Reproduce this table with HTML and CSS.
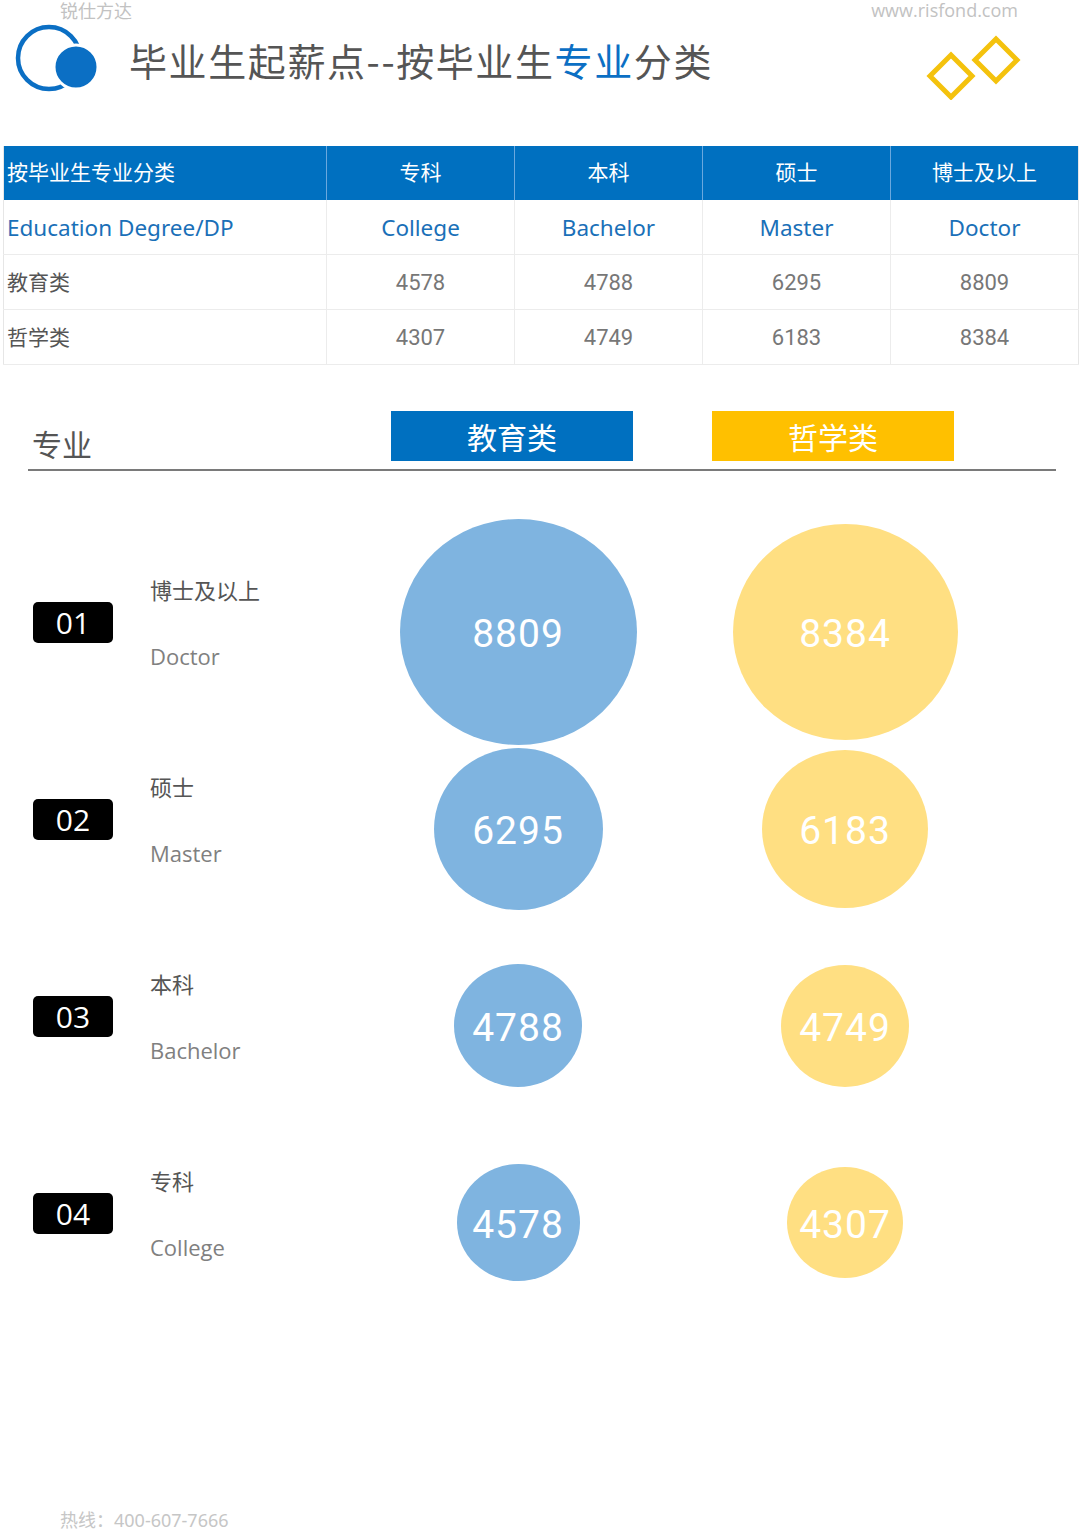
FILE: index.html
```html
<!DOCTYPE html>
<html lang="zh-CN">
<head>
<meta charset="utf-8">
<title>毕业生起薪点--按毕业生专业分类</title>
<link rel="stylesheet" href="styles.css">
</head>
<body>
<div class="page">
  <header class="header">
    <div class="topline">
      <span>锐仕方达</span>
      <span class="site">www.risfond.com</span>
    </div>
    <div class="brand">
      <svg class="logo" width="100" height="80" viewBox="0 0 100 80" aria-hidden="true">
        <circle cx="49" cy="38" r="31" fill="none" stroke="#0b6fc4" stroke-width="4.5"/>
        <circle cx="76" cy="47" r="22" fill="#0b6fc4" stroke="#ffffff" stroke-width="3"/>
      </svg>
      <h1 class="title">毕业生起薪点--按毕业生<span class="hl">专业</span>分类</h1>
      <svg class="diamonds" width="96" height="80" viewBox="0 0 96 80" aria-hidden="true">
        <polygon points="26,35 47,56 26,77 5,56" fill="none" stroke="#f4c20d" stroke-width="5"/>
        <polygon points="71,19 92,40 71,61 50,40" fill="none" stroke="#f4c20d" stroke-width="5"/>
      </svg>
    </div>
  </header>

  <table class="data">
    <colgroup>
      <col class="c0"><col class="c1"><col class="c1"><col class="c1"><col class="c1">
    </colgroup>
    <thead>
      <tr>
        <th class="first">按毕业生专业分类</th>
        <th>专科</th>
        <th>本科</th>
        <th>硕士</th>
        <th>博士及以上</th>
      </tr>
    </thead>
    <tbody>
      <tr class="en-row">
        <td class="first">Education Degree/DP</td>
        <td>College</td>
        <td>Bachelor</td>
        <td>Master</td>
        <td>Doctor</td>
      </tr>
      <tr>
        <td class="first">教育类</td>
        <td>4578</td>
        <td>4788</td>
        <td>6295</td>
        <td>8809</td>
      </tr>
      <tr>
        <td class="first">哲学类</td>
        <td>4307</td>
        <td>4749</td>
        <td>6183</td>
        <td>8384</td>
      </tr>
    </tbody>
  </table>

  <div class="legend">
    <span class="legend-label">专业</span>
    <span class="tag tag-blue">教育类</span>
    <span class="tag tag-yellow">哲学类</span>
  </div>

  <div class="rows">
    <div class="row">
      <div class="lead">
        <div class="badge-col"><span class="badge">01</span></div>
        <div class="label-col"><div class="cn">博士及以上</div><div class="en">Doctor</div></div>
      </div>
      <div class="circle-col blue-col"><div class="bubble blue" style="width:237px;height:226px">8809</div></div>
      <div class="circle-col yellow-col"><div class="bubble yellow" style="width:225px;height:216px">8384</div></div>
    </div>
    <div class="row">
      <div class="lead">
        <div class="badge-col"><span class="badge">02</span></div>
        <div class="label-col"><div class="cn">硕士</div><div class="en">Master</div></div>
      </div>
      <div class="circle-col blue-col"><div class="bubble blue" style="width:169px;height:162px">6295</div></div>
      <div class="circle-col yellow-col"><div class="bubble yellow" style="width:166px;height:158px">6183</div></div>
    </div>
    <div class="row">
      <div class="lead">
        <div class="badge-col"><span class="badge">03</span></div>
        <div class="label-col"><div class="cn">本科</div><div class="en">Bachelor</div></div>
      </div>
      <div class="circle-col blue-col"><div class="bubble blue" style="width:128px;height:123px">4788</div></div>
      <div class="circle-col yellow-col"><div class="bubble yellow" style="width:128px;height:122px">4749</div></div>
    </div>
    <div class="row">
      <div class="lead">
        <div class="badge-col"><span class="badge">04</span></div>
        <div class="label-col"><div class="cn">专科</div><div class="en">College</div></div>
      </div>
      <div class="circle-col blue-col"><div class="bubble blue" style="width:123px;height:117px">4578</div></div>
      <div class="circle-col yellow-col"><div class="bubble yellow" style="width:116px;height:111px">4307</div></div>
    </div>
  </div>

  <footer class="footer">热线：<span class="num">400-607-7666</span></footer>
</div>
</body>
</html>
```

FILE: styles.css
```css
html, body {
  margin: 0;
  padding: 0;
  background: #ffffff;
}
body {
  width: 1080px;
  height: 1531px;
  overflow: hidden;
  font-family: "Noto Sans", "Noto Sans CJK SC", sans-serif;
  color: #555555;
}
.page {
  width: 1080px;
}

/* header */
.topline {
  display: flex;
  justify-content: space-between;
  padding: 0 62px 0 60px;
  height: 20px;
  font-size: 18px;
  line-height: 20px;
  color: #c2c2c2;
  font-family: "Noto Sans CJK SC", sans-serif;
}
.site {
  font-family: "Open Sans", sans-serif;
}
.brand {
  display: flex;
  align-items: center;
  height: 80px;
}
.logo {
  flex: none;
  display: block;
}
.title {
  margin: 0 0 0 29px;
  font-size: 38px;
  font-weight: 400;
  line-height: 48px;
  color: #555555;
  letter-spacing: 1.6px;
  font-family: "Noto Sans CJK SC", sans-serif;
}
.title .hl {
  color: #0b6fc4;
}
.diamonds {
  flex: none;
  display: block;
  margin-left: auto;
  margin-right: 59px;
}

/* table */
.data {
  margin: 46px 3px 0 3px;
  width: 1074px;
  table-layout: fixed;
  border-collapse: collapse;
  border: 1px solid #e6e6e6;
  border-top: none;
}
.data .c0 { width: 323px; }
.data .c1 { width: 188px; }
.data th {
  background: #0070c0;
  color: #ffffff;
  height: 50px;
  padding: 0 0 4px 0;
  font-size: 21px;
  font-weight: 400;
  text-align: center;
  border-right: 1px solid #6aa8de;
  font-family: "Noto Sans CJK SC", sans-serif;
}
.data th:last-child {
  border-right: none;
}
.data td {
  height: 54px;
  padding: 0;
  text-align: center;
  font-size: 22px;
  color: #777777;
  font-family: Roboto, "Noto Sans CJK SC", sans-serif;
  border-right: 1px solid #ececec;
  border-bottom: 1px solid #ececec;
}
.data td:last-child {
  border-right: none;
}
.data .first {
  text-align: left;
  padding-left: 3px;
}
.data td.first {
  color: #555555;
  font-size: 21px;
  height: 51px;
  padding-bottom: 3px;
  font-family: "Noto Sans CJK SC", sans-serif;
}
.en-row td,
.en-row td.first {
  color: #1a70b8;
  font-family: "Noto Sans", sans-serif;
  font-size: 22.5px;
  height: 54px;
  padding-bottom: 0;
}

/* legend */
.legend {
  display: flex;
  align-items: flex-end;
  height: 58px;
  margin: 46px 24px 0 28px;
  border-bottom: 2px solid #7a7a7a;
}
.legend-label {
  width: 363px;
  padding-left: 4px;
  box-sizing: border-box;
  font-size: 30px;
  line-height: 36px;
  margin-bottom: 8px;
  color: #555555;
  font-family: "Noto Sans CJK SC", sans-serif;
}
.tag {
  width: 242px;
  height: 50px;
  margin-bottom: 8px;
  display: flex;
  align-items: center;
  justify-content: center;
  color: #ffffff;
  font-size: 30px;
  font-family: "Noto Sans CJK SC", sans-serif;
}
.tag-blue {
  background: #0070c0;
}
.tag-yellow {
  background: #ffc000;
  margin-left: 79px;
}

/* rows */
.rows {
  margin-top: 62px;
}
.row {
  display: flex;
  align-items: center;
  height: 197px;
}
.lead {
  display: flex;
  align-items: center;
  width: 390px;
  margin-bottom: 18px;
}
.badge-col {
  width: 150px;
  padding-left: 33px;
  box-sizing: border-box;
}
.badge {
  display: block;
  width: 80px;
  height: 41px;
  border-radius: 5px;
  background: #000000;
  color: #ffffff;
  text-align: center;
  font-size: 30px;
  line-height: 41px;
  font-family: "Open Sans", sans-serif;
}
.label-col {
  width: 240px;
}
.cn {
  font-size: 22px;
  line-height: 28px;
  color: #555555;
  font-family: "Noto Sans CJK SC", sans-serif;
}
.en {
  margin-top: 39px;
  font-size: 22px;
  line-height: 28px;
  color: #808080;
  font-family: "Open Sans", sans-serif;
}
.circle-col {
  display: flex;
  justify-content: center;
  align-items: center;
}
.blue-col {
  width: 256px;
}
.yellow-col {
  width: 398px;
}
.bubble {
  border-radius: 50%;
  display: flex;
  align-items: center;
  justify-content: center;
  box-sizing: border-box;
  padding-top: 5px;
  color: #ffffff;
  font-family: Roboto, sans-serif;
  font-size: 39px;
  letter-spacing: 1px;
  flex: none;
}
.blue {
  background: #7fb4e0;
}
.yellow {
  background: #ffdf82;
}

/* footer */
.footer {
  margin-top: 186px;
  padding-left: 60px;
  font-size: 18px;
  line-height: 24px;
  color: #c6c6c6;
  font-family: "Noto Sans CJK SC", sans-serif;
}
.footer .num {
  font-family: "Noto Sans", sans-serif;
}
```
